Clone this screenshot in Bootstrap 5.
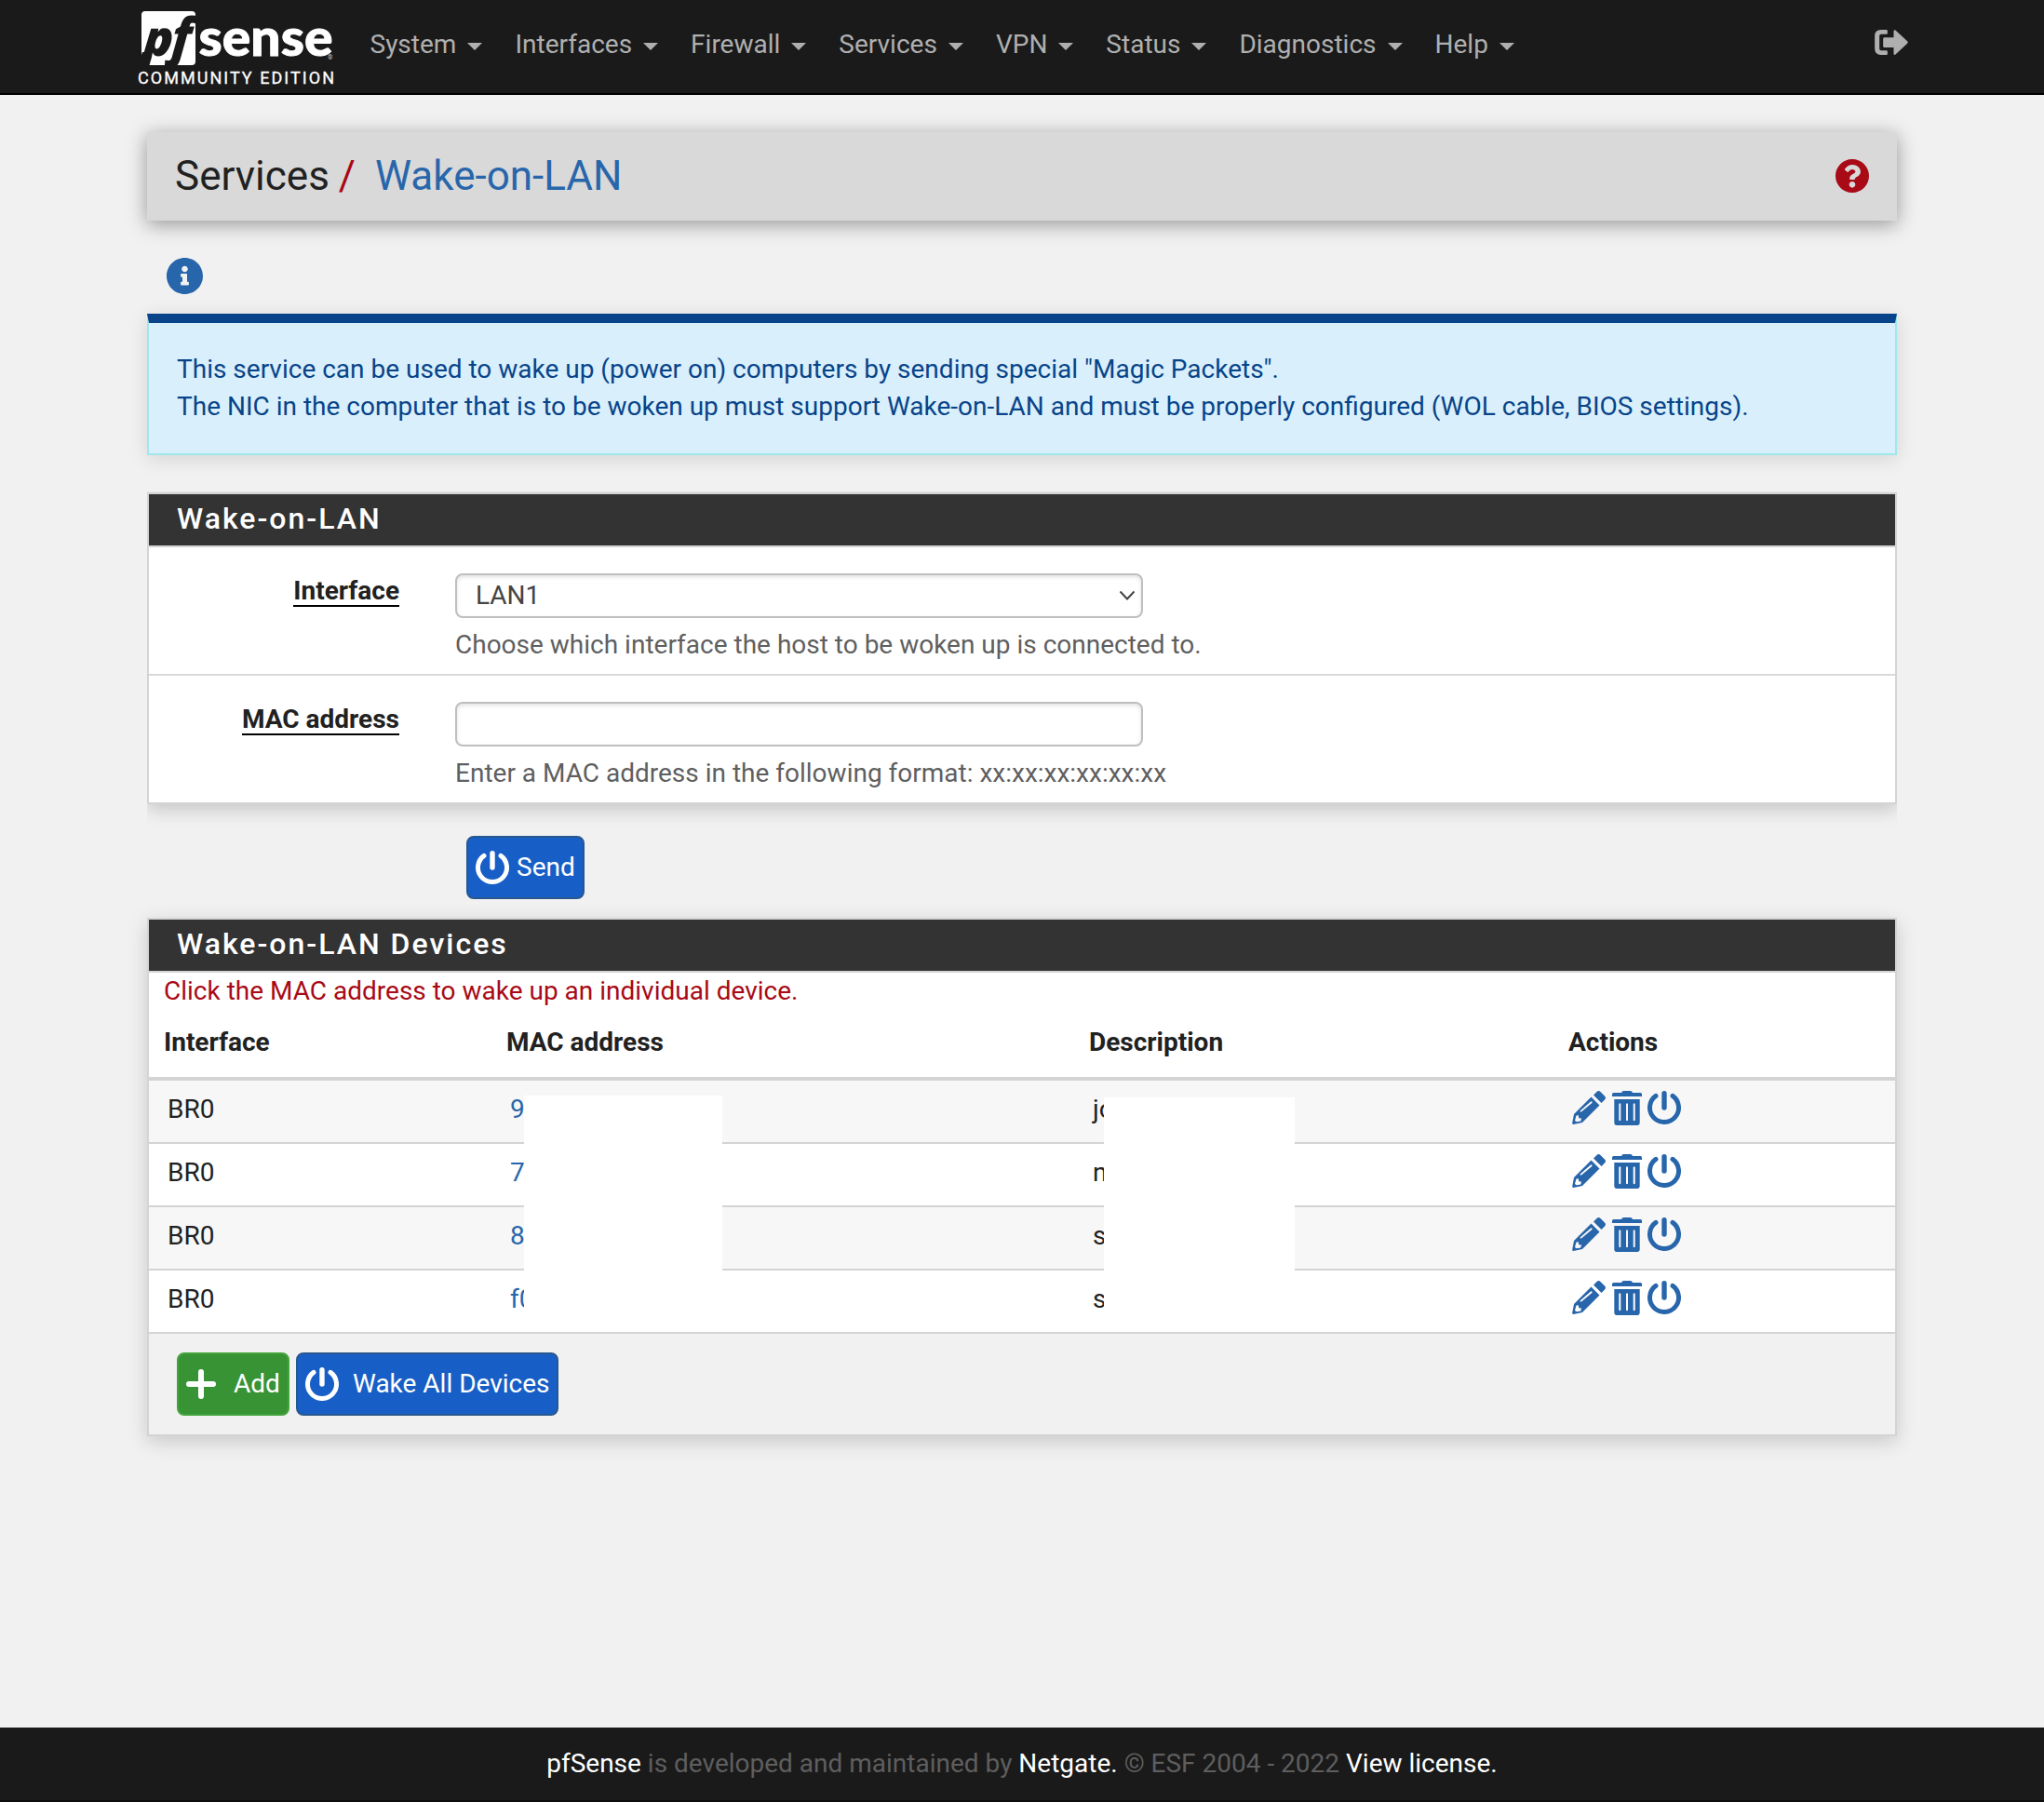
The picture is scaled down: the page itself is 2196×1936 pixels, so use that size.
<!DOCTYPE html>
<html lang="en">
<head>
<meta charset="utf-8">
<title>pfSense - Services: Wake-on-LAN</title>
<link href="https://cdn.jsdelivr.net/npm/bootstrap@5.3.0/dist/css/bootstrap.min.css" rel="stylesheet">
<style>
body{font-family:Roboto,"Liberation Sans",sans-serif;font-size:28px;line-height:40px;color:#212121;background:#f1f1f1;height:1936px;overflow:hidden}
.page-width{width:1940px;max-width:1940px;margin:0 auto;padding:0 30px}
.topbar{height:102px;background:#1a1a1a;border-bottom:2px solid #000;padding:0}
.topbar .page-width{height:100px}
.brand-logo{width:240px;height:100px;margin-left:-18px;display:block;flex:none}
.topbar .navbar-nav .nav-link{color:#afafaf;padding:28px 17.5px 32px;line-height:40px;display:flex;align-items:center}
.topbar .nav-link::after{margin:4px 0 0 12px;border-width:8px 8px 0;vertical-align:0}
.ico{display:block;flex:none}
.logout{color:#afafaf;margin-right:-12px;margin-top:-9px}
.title-bar{height:95px;margin-top:40px;padding:0 30px 2px;background:#d9d9d9;box-shadow:0 4px 20px rgba(0,0,0,.38);font-size:44px}
.title-bar .slash{color:#aa0714;margin:0 21px 0 10px}
.title-bar a,.blue{color:#2866ab;text-decoration:none}
.help{color:#a80a16}
.info-btn{margin:40px 0 0 20.5px;width:40px;height:40px;color:#2866ab}
.infobox{margin:20px 0 0;padding:30px;border:2px solid #a0e7ec;border-top:10px solid #084489;border-radius:0;background:#d9effc;color:#084489;box-shadow:0 4px 20px rgba(0,0,0,.12)}
.panel{border:2px solid #d4d4d4;border-radius:0;background:#fff;color:#212121}
.panel-form{margin-top:40px;box-shadow:0 6px 18px rgba(0,0,0,.18);clip-path:inset(-1px 0 -40px 0)}
.panel-dev{margin-top:20px;box-shadow:0 6px 20px rgba(0,0,0,.17)}
.panel-title{height:57px;padding:0 30px;margin:0;background:#333;color:#fff;border-bottom:2px solid #d4d4d4;font-size:32px;font-weight:500;letter-spacing:2px;line-height:53px}
.field{box-sizing:content-box;padding-top:28px;height:108px;display:flex}
.field + .field{border-top:2px solid #d9d9d9}
.field-label{width:269px;text-align:right;font-weight:700;flex:none;margin-right:60px;line-height:38px}
.field-label span{display:inline-block;height:36px;border-bottom:2px solid #000}
.field .form-control,.field .form-select{width:739px;height:48px;border:2px solid #bfbfbf;border-radius:8px;padding:0 20px;font-size:28px;line-height:44px;color:#444;box-shadow:inset 0 2px 4px rgba(0,0,0,.12);background-color:#fff}
.field .form-select{background-image:url("data:image/svg+xml,%3Csvg xmlns='http://www.w3.org/2000/svg' viewBox='0 0 18 12'%3E%3Cpath d='M1.5 1.5L9 9.5L16.5 1.5' fill='none' stroke='%23444' stroke-width='2'/%3E%3C/svg%3E");background-size:18px 12px;background-position:right 6px center}
.hint{color:#5f5f5f;margin-top:9px}
.pbtn{height:68px;border-radius:8px;border:2px solid #28578f;background:#175fc6;color:#fff!important;font-size:28px;line-height:40px;display:flex;align-items:center;padding:0 0 1px 8px;white-space:nowrap}
.pbtn.add{background:#389335;border-color:#43a43c}
.send{margin:34px 0 0 343px;width:127px}
.dev{margin:0;table-layout:fixed;width:100%;color:#212121;line-height:40px;border-collapse:separate;border-spacing:0}
.note{color:#a80a16;padding-left:16px;height:40px;line-height:39px}
.dev th{padding:15px 16px;height:76px;border:0;border-bottom:4px solid #d4d4d4;font-weight:700;background:#fff;vertical-align:top}
.dev td{height:68px;padding:11px 20px 0;border:0;border-bottom:2px solid #d4d4d4;vertical-align:top;color:#212121;line-height:40px}
.dev tbody tr:nth-child(odd) td{background:#f7f7f7;box-shadow:none}
.dev tbody tr:nth-child(even) td{background:#fff}
.acts .ico + .ico{margin-left:6.5px}
.blank{position:absolute;background:#fff}
.foot-actions{height:108px;background:#f1f1f1;padding:20px 30px;display:flex;gap:7px}
.footer-bar{height:80px;background:#1a1a1a;border-bottom:2px solid #0d0d0d;color:#5e5e5e;text-align:center;line-height:40px;padding-top:19px}
.footer-bar a{color:#fff;text-decoration:none}
</style>
<script src="https://cdn.jsdelivr.net/npm/bootstrap@5.3.0/dist/js/bootstrap.bundle.min.js"></script>
</head>
<body class="d-flex flex-column">
<svg width="0" height="0" class="position-absolute">
<symbol id="power" viewBox="0 0 36 36"><path d="M9 5.4A15.5 15.5 0 1 0 27 5.4" fill="none" stroke="currentColor" stroke-width="5" stroke-linecap="round"/><path d="M18 2.7V18" stroke="currentColor" stroke-width="5.4" stroke-linecap="round"/></symbol>
<symbol id="trash" viewBox="0 0 32 37"><path fill="currentColor" fill-rule="evenodd" d="M10 2Q10.500 0 12.500 0H19.500Q21.500 0 22 2H30.500Q32 2 32 3.500V6H0V3.500Q0 2 1.500 2ZM2.300 9H29.700V34Q29.700 37 27 37H5Q2.300 37 2.300 34ZM7.300 14V31.500Q8.300 33 9.300 31.500V14Q8.300 12.500 7.300 14ZM15 14V31.500Q16 33 17 31.500V14Q16 12.500 15 14ZM22.700 14V31.500Q23.700 33 24.700 31.500V14Q23.700 12.500 22.700 14Z"/></symbol>
<symbol id="pencil" viewBox="0 0 36 36"><path fill="currentColor" fill-rule="evenodd" d="M23 4.500L26.500 1Q28.500-.800 30.500 1L35 5.500Q37 7.500 35 9.500L31.500 13ZM20.500 6.500L29.500 15.500L11 34L1.500 36Q0 36 .2 34.500L2 25ZM8.800 21.200Q8.300 23 10 22.400L21.600 12.700Q21.800 11 20 11.400ZM4.500 26.500L3 32L4.800 33.300L9.300 32.500L10 29.500L7.200 29.200L6.800 26.200Z"/></symbol>
</svg>
<nav class="navbar navbar-expand topbar flex-shrink-0">
<div class="page-width d-flex align-items-center">
<svg class="brand-logo" viewBox="140 0 240 100">
<path d="M152 16q0-4 4-4h50q4 0 4 4v50q0 4-4 4h-48l3-14h-8l-1 3z" fill="#fff"/>
<g font-family="Open Sans" font-weight="800" font-style="italic" fill="#1a1a1a">
<text transform="translate(153 60) skewX(-5)" x="0" y="0" font-size="53" textLength="32" lengthAdjust="spacingAndGlyphs">p</text>
<text transform="translate(183 60) skewX(-5)" x="0" y="0" font-size="57" textLength="21" lengthAdjust="spacingAndGlyphs">f</text>
</g>
<text x="213.500" y="60" font-family="Lato" font-weight="900" font-size="56" fill="#fff" stroke="#fff" stroke-width=".9" textLength="144" lengthAdjust="spacingAndGlyphs">sense</text>
<text x="352" y="63.500" font-family="Roboto" font-size="7" fill="#ccc">®</text>
<text x="148" y="89.500" font-family="Roboto" font-weight="400" font-size="18" fill="#fff" stroke="#fff" stroke-width=".3" textLength="211">COMMUNITY EDITION</text>
</svg>
<ul class="navbar-nav">
<li class="nav-item"><a class="nav-link dropdown-toggle" href="#">System</a></li>
<li class="nav-item"><a class="nav-link dropdown-toggle" href="#">Interfaces</a></li>
<li class="nav-item"><a class="nav-link dropdown-toggle" href="#">Firewall</a></li>
<li class="nav-item"><a class="nav-link dropdown-toggle" href="#">Services</a></li>
<li class="nav-item"><a class="nav-link dropdown-toggle" href="#">VPN</a></li>
<li class="nav-item"><a class="nav-link dropdown-toggle" href="#">Status</a></li>
<li class="nav-item"><a class="nav-link dropdown-toggle" href="#">Diagnostics</a></li>
<li class="nav-item"><a class="nav-link dropdown-toggle" href="#">Help</a></li>
</ul>
<a href="#" class="logout ms-auto"><svg class="ico" width="36" height="27" viewBox="342 96 107 81"><path fill="currentColor" d="M380 96h-18q-20 0-20 20v41q0 20 20 20h18q3 0 3-3v-8q0-3-3-3h-18q-5 0-5-6v-41q0-6 5-6h18q3 0 3-3v-8q0-3-3-3zM373 121h30v-20q0-6 5-4l39 36q3 3 0 7l-39 36q-5 3-5-4v-19h-30q-4 0-4-4v-24q0-4 4-4z"/></svg></a>
</div>
</nav>
<main class="page-width flex-grow-1">
<header class="title-bar d-flex align-items-center">
<span>Services</span><span class="slash">/</span><a href="#">Wake-on-LAN</a>
<a href="#" class="help ms-auto"><svg class="ico" width="36" height="36" viewBox="8 8 496 496"><path fill="#a80a16" d="M504 256c0 136.997-111.043 248-248 248S8 392.997 8 256C8 119.083 119.043 8 256 8s248 111.083 248 248zM262.655 90c-54.497 0-89.255 22.957-116.549 63.758-3.536 5.286-2.353 12.415 2.715 16.258l34.699 26.31c5.205 3.947 12.621 3.008 16.665-2.122 17.864-22.658 30.113-35.797 57.303-35.797 20.429 0 45.698 13.148 45.698 32.958 0 14.976-12.363 22.667-32.534 33.976C247.128 238.528 216 254.941 216 296v4c0 6.627 5.373 12 12 12h56c6.627 0 12-5.373 12-12v-1.333c0-28.462 83.186-29.647 83.186-106.667 0-58.002-60.165-102-116.531-102zM256 338c-25.365 0-46 20.635-46 46 0 25.364 20.635 46 46 46s46-20.636 46-46c0-25.365-20.635-46-46-46z"/></svg></a>
</header>
<div class="info-btn"><svg class="ico" width="39" height="39" viewBox="8 8 496 496"><path fill="currentColor" d="M256 8C119.043 8 8 119.083 8 256c0 136.997 111.043 248 248 248s248-111.003 248-248C504 119.083 392.957 8 256 8zm0 110c23.196 0 42 18.804 42 42s-18.804 42-42 42-42-18.804-42-42 18.804-42 42-42zm56 254c0 6.627-5.373 12-12 12h-88c-6.627 0-12-5.373-12-12v-24c0-6.627 5.373-12 12-12h12v-64h-12c-6.627 0-12-5.373-12-12v-24c0-6.627 5.373-12 12-12h64c6.627 0 12 5.373 12 12v100h12c6.627 0 12 5.373 12 12v24z"/></svg></div>
<div class="alert infobox">This service can be used to wake up (power on) computers by sending special "Magic Packets".<br>The NIC in the computer that is to be woken up must support Wake-on-LAN and must be properly configured (WOL cable, BIOS settings).</div>
<form>
<section class="panel panel-form">
<h2 class="panel-title">Wake-on-LAN</h2>
<div class="field"><label class="field-label"><span>Interface</span></label><div><select class="form-select"><option>LAN1</option></select><div class="hint">Choose which interface the host to be woken up is connected to.</div></div></div>
<div class="field"><label class="field-label"><span>MAC address</span></label><div><input class="form-control" type="text"><div class="hint">Enter a MAC address in the following format: xx:xx:xx:xx:xx:xx</div></div></div>
</section>
<button type="button" class="btn pbtn send"><svg class="ico me-2" width="36" height="36"><use href="#power"/></svg>Send</button>
</form>
<section class="panel panel-dev">
<h2 class="panel-title">Wake-on-LAN Devices</h2>
<div class="note">Click the MAC address to wake up an individual device.</div>
<div class="position-relative">
<table class="table dev">
<colgroup><col style="width:368px"><col style="width:626px"><col style="width:515px"><col></colgroup>
<thead><tr><th>Interface</th><th>MAC address</th><th>Description</th><th>Actions</th></tr></thead>
<tbody>
<tr><td>BR0</td><td><a class="blue" href="#">9</a></td><td>jo</td><td><div class="acts blue d-flex"><svg class="ico" width="36" height="36"><use href="#pencil"/></svg><svg class="ico" width="32" height="37"><use href="#trash"/></svg><svg class="ico" width="36" height="36"><use href="#power"/></svg></div></td></tr>
<tr><td>BR0</td><td><a class="blue" href="#">7</a></td><td>n</td><td><div class="acts blue d-flex"><svg class="ico" width="36" height="36"><use href="#pencil"/></svg><svg class="ico" width="32" height="37"><use href="#trash"/></svg><svg class="ico" width="36" height="36"><use href="#power"/></svg></div></td></tr>
<tr><td>BR0</td><td><a class="blue" href="#">8</a></td><td>s</td><td><div class="acts blue d-flex"><svg class="ico" width="36" height="36"><use href="#pencil"/></svg><svg class="ico" width="32" height="37"><use href="#trash"/></svg><svg class="ico" width="36" height="36"><use href="#power"/></svg></div></td></tr>
<tr><td>BR0</td><td><a class="blue" href="#">f0</a></td><td>s</td><td><div class="acts blue d-flex"><svg class="ico" width="36" height="36"><use href="#pencil"/></svg><svg class="ico" width="32" height="37"><use href="#trash"/></svg><svg class="ico" width="36" height="36"><use href="#power"/></svg></div></td></tr>
</tbody>
</table>
<div class="blank" style="left:403px;top:92px;width:213px;height:236px"></div>
<div class="blank" style="left:1026px;top:94px;width:205px;height:234px"></div>
</div>
<div class="foot-actions">
<a href="#" class="btn pbtn add" style="width:121px"><svg class="ico" width="32" height="32" viewBox="0 0 32 32" style="margin-right:19px"><path d="M16 3V29M3 16H29" stroke="#fff" stroke-width="6" stroke-linecap="round"/></svg>Add</a>
<a href="#" class="btn pbtn" style="width:282px"><svg class="ico" width="36" height="36" style="margin-right:15px"><use href="#power"/></svg>Wake All Devices</a>
</div>
</section>
</main>
<footer class="footer-bar flex-shrink-0"><a href="#">pfSense</a> is developed and maintained by <a href="#">Netgate.</a> © ESF 2004 - 2022 <a href="#">View license.</a></footer>
</body>
</html>
